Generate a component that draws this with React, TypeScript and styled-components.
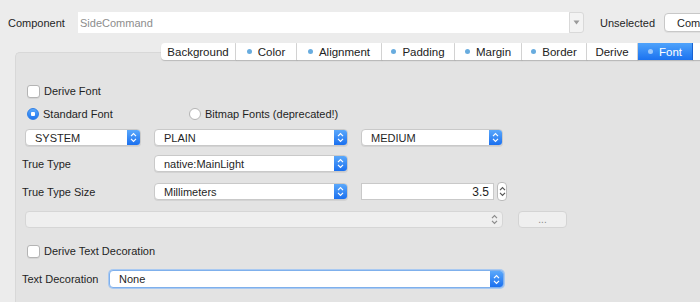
import styled, { createGlobalStyle } from "styled-components";

const Global = createGlobalStyle`
  html, body { margin: 0; padding: 0; background: #ececec; }
  body {
    font-family: "Liberation Sans", Arial, sans-serif;
    font-size: 11px;
    color: #1f1f1f;
  }
`;

const TABS = [
  { label: "Background", w: 75, dot: false },
  { label: "Color", w: 61, dot: true },
  { label: "Alignment", w: 85, dot: true },
  { label: "Padding", w: 73, dot: true },
  { label: "Margin", w: 67, dot: true },
  { label: "Border", w: 65, dot: true },
  { label: "Derive", w: 51, dot: false },
  { label: "Font", w: 55, dot: true, active: true },
  { label: "", w: 60, dot: false },
];

function UpDown({ color = "#fff" }: { color?: string }) {
  return (
    <svg width="7" height="11" viewBox="0 0 7 11">
      <path d="M1 4.2 L3.5 1.7 L6 4.2 M1 6.8 L3.5 9.3 L6 6.8" fill="none" stroke={color} strokeWidth="1.2" />
    </svg>
  );
}

function Select({ value, width, focused }: { value: string; width: number; focused?: boolean }) {
  return (
    <SelectBox $w={width} $focused={focused}>
      <SelectText>{value}</SelectText>
      <SelectArrow>
        <UpDown />
      </SelectArrow>
    </SelectBox>
  );
}

function Check({ label }: { label: string }) {
  return (
    <Choice>
      <CheckBox />
      {label}
    </Choice>
  );
}

function Radio({ label, on, width }: { label: string; on?: boolean; width?: number }) {
  return (
    <Choice $w={width}>
      <RadioDot $on={on} />
      {label}
    </Choice>
  );
}

export default function App() {
  return (
    <>
      <Global />
      <Root>
        <TopBar>
          <TopLabel>Component</TopLabel>
          <ComboField>SideCommand</ComboField>
          <ComboArrow>
            <svg width="7" height="5" viewBox="0 0 7 5">
              <path d="M0.5 0.5 H6.5 L3.5 4.5 Z" fill="#9a9a9a" />
            </svg>
          </ComboArrow>
          <TopText>Unselected</TopText>
          <TopButton>Component</TopButton>
        </TopBar>

        <TabRow>
          {TABS.map((t, i) => (
            <Tab key={i} $w={t.w} $active={t.active} $first={i === 0}>
              {t.dot && <TabDot $active={t.active} />}
              {t.label}
            </Tab>
          ))}
        </TabRow>

        <Panel>
          <Row $mt={31} $pl={11} $h={14}>
            <Check label="Derive Font" />
          </Row>

          <Row $mt={9} $pl={11} $h={14}>
            <Radio label="Standard Font" on width={162} />
            <Radio label="Bitmap Fonts (deprecated!)" />
          </Row>

          <Row $mt={8} $pl={9} $h={17} $gap={13}>
            <Select value="SYSTEM" width={116} />
            <Select value="PLAIN" width={194} />
            <Select value="MEDIUM" width={142} />
          </Row>

          <Row $mt={9} $pl={6} $h={17}>
            <FieldLabel $w={132}>True Type</FieldLabel>
            <Select value="native:MainLight" width={194} />
          </Row>

          <Row $mt={11} $pl={6} $h={17}>
            <FieldLabel $w={132}>True Type Size</FieldLabel>
            <Select value="Millimeters" width={194} />
            <NumberField>3.5</NumberField>
            <Spinner>
              <UpDown color="#555" />
            </Spinner>
          </Row>

          <Row $mt={11} $pl={9} $h={17} $gap={15}>
            <DisabledCombo>
              <UpDown color="#8a8a8a" />
            </DisabledCombo>
            <DotsButton>...</DotsButton>
          </Row>

          <Row $mt={16} $pl={11} $h={14}>
            <Check label="Derive Text Decoration" />
          </Row>

          <Row $mt={12} $pl={6} $h={18}>
            <FieldLabel $w={87}>Text Decoration</FieldLabel>
            <Select value="None" width={395} focused />
          </Row>
        </Panel>
      </Root>
    </>
  );
}

const Root = styled.div`
  width: 700px;
  height: 302px;
  overflow: hidden;
  background: #ececec;
`;

const TopBar = styled.div`
  display: flex;
  align-items: center;
  height: 21px;
  padding: 12px 0 0 8px;
  white-space: nowrap;
`;
const TopLabel = styled.span`
  width: 70px;
  flex-shrink: 0;
`;
const ComboField = styled.div`
  width: 489px;
  height: 21px;
  flex-shrink: 0;
  padding-left: 2px;
  background: #fff;
  color: #8d8d8d;
  display: flex;
  align-items: center;
`;
const ComboArrow = styled.div`
  width: 13px;
  height: 19px;
  flex-shrink: 0;
  border: 1px solid #d9d9d9;
  border-radius: 0 3px 3px 0;
  background: #f3f3f3;
  display: flex;
  align-items: center;
  justify-content: center;
`;
const TopText = styled.span`
  margin-left: 16px;
  flex-shrink: 0;
`;
const TopButton = styled.div`
  margin-left: 9px;
  flex-shrink: 0;
  height: 17px;
  padding: 0 14px 0 12px;
  border: 1px solid #c8c8c8;
  border-radius: 4px;
  background: #fff;
  display: flex;
  align-items: center;
  box-shadow: 0 1px 0 rgba(0, 0, 0, 0.05);
`;

const TabRow = styled.div`
  display: flex;
  height: 17px;
  margin: 10px 0 -8px 161px;
  position: relative;
  z-index: 1;
  white-space: nowrap;
`;
const Tab = styled.div<{ $w: number; $active?: boolean; $first?: boolean }>`
  width: ${({ $w }) => $w}px;
  flex-shrink: 0;
  box-sizing: border-box;
  display: flex;
  align-items: center;
  justify-content: center;
  gap: 6px;
  font-size: 11.5px;
  color: ${({ $active }) => ($active ? "#fff" : "#222")};
  background: ${({ $active }) => ($active ? "linear-gradient(#4fa3fb, #1b72f0)" : "#fff")};
  border-right: 1px solid ${({ $active }) => ($active ? "#1a66d8" : "#d8d8d8")};
  border-radius: ${({ $first }) => ($first ? "4px 0 0 4px" : "0")};
  box-shadow: 0 1px 1px rgba(0, 0, 0, 0.18);
`;
const TabDot = styled.span<{ $active?: boolean }>`
  width: 5px;
  height: 5px;
  border-radius: 50%;
  background: ${({ $active }) => ($active ? "#9cc9fb" : "#68acdf")};
`;

const Panel = styled.div`
  margin-left: 15px;
  height: 260px;
  background: #e3e3e3;
  border-top: 1px solid #d8d8d8;
  border-left: 1px solid #d8d8d8;
  border-top-left-radius: 5px;
  display: flex;
  flex-direction: column;
`;

const Row = styled.div<{ $mt: number; $pl: number; $h: number; $gap?: number }>`
  display: flex;
  align-items: center;
  height: ${({ $h }) => $h}px;
  margin-top: ${({ $mt }) => $mt}px;
  padding-left: ${({ $pl }) => $pl}px;
  gap: ${({ $gap }) => $gap ?? 0}px;
  white-space: nowrap;
`;

const Choice = styled.label<{ $w?: number }>`
  display: flex;
  align-items: center;
  gap: 4px;
  width: ${({ $w }) => ($w ? `${$w}px` : "auto")};
  flex-shrink: 0;
`;
const CheckBox = styled.span`
  width: 11px;
  height: 11px;
  border: 1px solid #b4b4b4;
  border-radius: 3px;
  background: #fff;
  box-shadow: 0 1px 0 rgba(0, 0, 0, 0.06);
`;
const RadioDot = styled.span<{ $on?: boolean }>`
  width: 12px;
  height: 12px;
  box-sizing: border-box;
  border-radius: 50%;
  border: 1px solid ${({ $on }) => ($on ? "#2f7fe6" : "#b4b4b4")};
  background: ${({ $on }) =>
    $on ? "radial-gradient(circle, #fff 0 2px, transparent 2.5px), linear-gradient(#5aa8fb, #1e74ef)" : "#fff"};
`;

const FieldLabel = styled.span<{ $w: number }>`
  width: ${({ $w }) => $w}px;
  flex-shrink: 0;
`;

const SelectBox = styled.div<{ $w: number; $focused?: boolean }>`
  width: ${({ $w }) => $w}px;
  height: 100%;
  box-sizing: border-box;
  flex-shrink: 0;
  display: flex;
  background: #fff;
  border: 1px solid ${({ $focused }) => ($focused ? "#7fb0ec" : "#c9c9c9")};
  border-radius: 4px;
  overflow: hidden;
  box-shadow: ${({ $focused }) => ($focused ? "0 0 0 1px #a9c9f1" : "0 1px 0 rgba(0, 0, 0, 0.07)")};
`;
const SelectText = styled.span`
  flex: 1;
  display: flex;
  align-items: center;
  padding-left: 9px;
`;
const SelectArrow = styled.span`
  width: 13px;
  display: flex;
  align-items: center;
  justify-content: center;
  background: linear-gradient(#5aa8fb, #1b70ef);
`;

const NumberField = styled.div`
  margin-left: 13px;
  width: 133px;
  height: 100%;
  box-sizing: border-box;
  display: flex;
  align-items: center;
  justify-content: flex-end;
  padding-right: 4px;
  background: #fff;
  border: 1px solid #c9c9c9;
  font-size: 12px;
`;
const Spinner = styled.div`
  margin-left: 3px;
  width: 10px;
  height: 19px;
  box-sizing: border-box;
  border: 1px solid #bcbcbc;
  border-radius: 4px;
  background: #fff;
  display: flex;
  align-items: center;
  justify-content: center;
`;

const DisabledCombo = styled.div`
  width: 478px;
  height: 100%;
  box-sizing: border-box;
  display: flex;
  align-items: center;
  justify-content: flex-end;
  padding-right: 4px;
  background: #efefef;
  border: 1px solid #d6d6d6;
  border-radius: 4px;
`;
const DotsButton = styled.div`
  width: 49px;
  height: 100%;
  box-sizing: border-box;
  display: flex;
  align-items: center;
  justify-content: center;
  background: #efefef;
  border: 1px solid #d4d4d4;
  border-radius: 4px;
  color: #8a8a8a;
  font-size: 10px;
`;
